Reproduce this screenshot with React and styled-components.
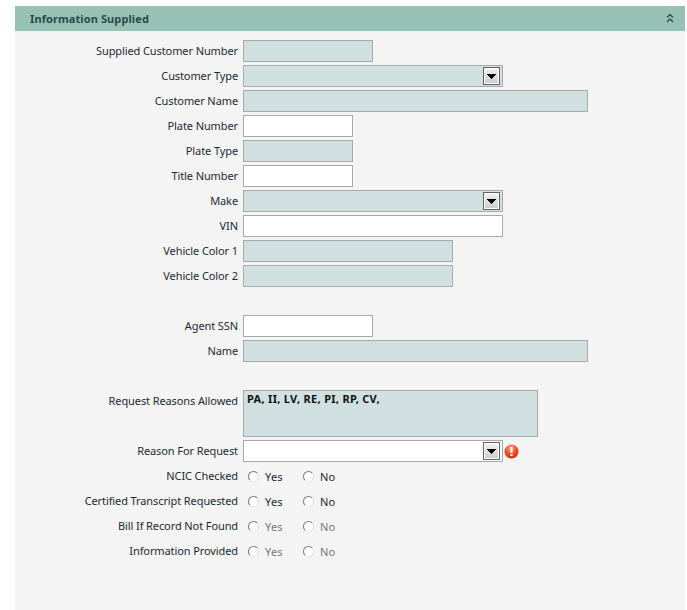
import React from 'react';
import styled, { createGlobalStyle } from 'styled-components';

const Global = createGlobalStyle`
  html, body { margin: 0; padding: 0; background: #fff; }
  body { font-family: "Noto Sans", "DejaVu Sans", sans-serif; font-size: 11px; color: #1c2a33; }
`;

const Page = styled.div`
  width: 687px;
  height: 610px;
  padding: 6px 2px 0 15px;
  box-sizing: border-box;
  overflow: hidden;
`;

const Panel = styled.section`
  height: 604px;
  background: #f4f4f4;
`;

const Header = styled.header`
  height: 25px;
  background: #98c1b5;
  display: flex;
  align-items: center;
  justify-content: space-between;
  padding: 0 11px 0 15px;
`;

const Title = styled.h2`
  margin: 0;
  font-size: 11px;
  font-weight: 700;
  letter-spacing: 0.1px;
  color: #2b4a4a;
`;

const Form = styled.div`
  padding-top: 9px;
  display: flex;
  flex-direction: column;
  gap: 3px;
`;

const Row = styled.div`
  display: flex;
  align-items: ${p => (p.$top ? 'flex-start' : 'center')};
  min-height: 22px;
  margin-top: ${p => p.$gap || 0}px;
`;

const Label = styled.label`
  width: 223px;
  margin-right: 5px;
  padding-bottom: ${p => (p.$top ? 0 : 2)}px;
  text-align: right;
  white-space: nowrap;
  letter-spacing: -0.1px;
  flex: none;
  line-height: ${p => (p.$top ? '22px' : 'normal')};
`;

const Input = styled.div`
  box-sizing: border-box;
  width: ${p => p.$w}px;
  height: 22px;
  border: 1px solid #a8aaaa;
  background: ${p => (p.$locked ? '#d0dfdf' : '#fff')};
`;

const Select = styled(Input)`
  display: flex;
  justify-content: flex-end;
  align-items: center;
  padding-right: 2px;
`;

const DropButton = styled.div`
  box-sizing: border-box;
  width: 17px;
  height: 18px;
  border: 1px solid #5f6262;
  box-shadow: inset 0 0 0 1px #fff;
  background: linear-gradient(#f2f2f2, #cbcbcb);
  display: flex;
  align-items: center;
  justify-content: center;
`;

const DropArrow = () => (
  <svg width="9" height="5" viewBox="0 0 9 5" fill="#000">
    <path d="M0 0h9v1H8v1H7v1H6v1H5v1H4V4H3V3H2V2H1V1H0z" />
  </svg>
);

const TextArea = styled.div`
  box-sizing: border-box;
  width: 295px;
  height: 47px;
  border: 1px solid #a8aaaa;
  background: #d0dfdf;
  padding: 0 3px;
  font-weight: 700;
  letter-spacing: 0.3px;
  color: #111;
`;

const Radios = styled.div`
  display: flex;
  padding-left: 5px;
`;

const RadioOption = styled.span`
  width: 55px;
  display: flex;
  align-items: center;
  gap: 6px;
  letter-spacing: 0.2px;
  color: ${p => (p.$off ? '#777' : '#1c2a33')};
`;

const RadioDot = styled.span`
  box-sizing: border-box;
  width: 11px;
  height: 11px;
  border-radius: 50%;
  border: 1px solid;
  border-color: #7a7a7a #dcdcdc #e8e8e8 #7a7a7a;
  background: #fff;
`;

const ErrorIcon = () => (
  <svg width="15" height="15" viewBox="0 0 15 15" style={{ marginLeft: 1 }}>
    <defs>
      <radialGradient id="err" cx="45%" cy="25%" r="80%">
        <stop offset="0" stopColor="#fba98c" />
        <stop offset="0.55" stopColor="#ec4a20" />
        <stop offset="1" stopColor="#c0300f" />
      </radialGradient>
    </defs>
    <circle cx="7.5" cy="7.5" r="7" fill="url(#err)" />
    <rect x="6.4" y="3" width="2.2" height="6" rx="0.8" fill="#fff" />
    <rect x="6.4" y="10" width="2.2" height="2" rx="0.6" fill="#fff" />
  </svg>
);

const Collapse = () => (
  <svg width="8" height="10" viewBox="0 0 8 10" fill="none" stroke="#2b4a4a" strokeWidth="1.3" style={{ marginBottom: 2 }}>
    <path d="M1 4.5 L4 1.5 L7 4.5" />
    <path d="M1 9 L4 6 L7 9" />
  </svg>
);

const Field = ({ label, children, gap, top }) => (
  <Row $gap={gap} $top={top}>
    <Label $top={top}>{label}</Label>
    {children}
  </Row>
);

const YesNo = ({ off }) => (
  <Radios>
    <RadioOption $off={off}><RadioDot />Yes</RadioOption>
    <RadioOption $off={off}><RadioDot />No</RadioOption>
  </Radios>
);

export default function App() {
  return (
    <Page>
      <Global />
      <Panel>
        <Header>
          <Title>Information Supplied</Title>
          <Collapse />
        </Header>
        <Form>
          <Field label="Supplied Customer Number"><Input $w={130} $locked /></Field>
          <Field label="Customer Type"><Select $w={260} $locked><DropButton><DropArrow /></DropButton></Select></Field>
          <Field label="Customer Name"><Input $w={345} $locked /></Field>
          <Field label="Plate Number"><Input $w={110} /></Field>
          <Field label="Plate Type"><Input $w={110} $locked /></Field>
          <Field label="Title Number"><Input $w={110} /></Field>
          <Field label="Make"><Select $w={260} $locked><DropButton><DropArrow /></DropButton></Select></Field>
          <Field label="VIN"><Input $w={260} /></Field>
          <Field label="Vehicle Color 1"><Input $w={210} $locked /></Field>
          <Field label="Vehicle Color 2"><Input $w={210} $locked /></Field>
          <Field label="Agent SSN" gap={25}><Input $w={130} /></Field>
          <Field label="Name"><Input $w={345} $locked /></Field>
          <Field label="Request Reasons Allowed" gap={25} top>
            <TextArea>PA, II, LV, RE, PI, RP, CV,</TextArea>
          </Field>
          <Field label="Reason For Request">
            <Select $w={260}><DropButton><DropArrow /></DropButton></Select>
            <ErrorIcon />
          </Field>
          <Field label="NCIC Checked"><YesNo /></Field>
          <Field label="Certified Transcript Requested"><YesNo /></Field>
          <Field label="Bill If Record Not Found"><YesNo off /></Field>
          <Field label="Information Provided"><YesNo off /></Field>
        </Form>
      </Panel>
    </Page>
  );
}
